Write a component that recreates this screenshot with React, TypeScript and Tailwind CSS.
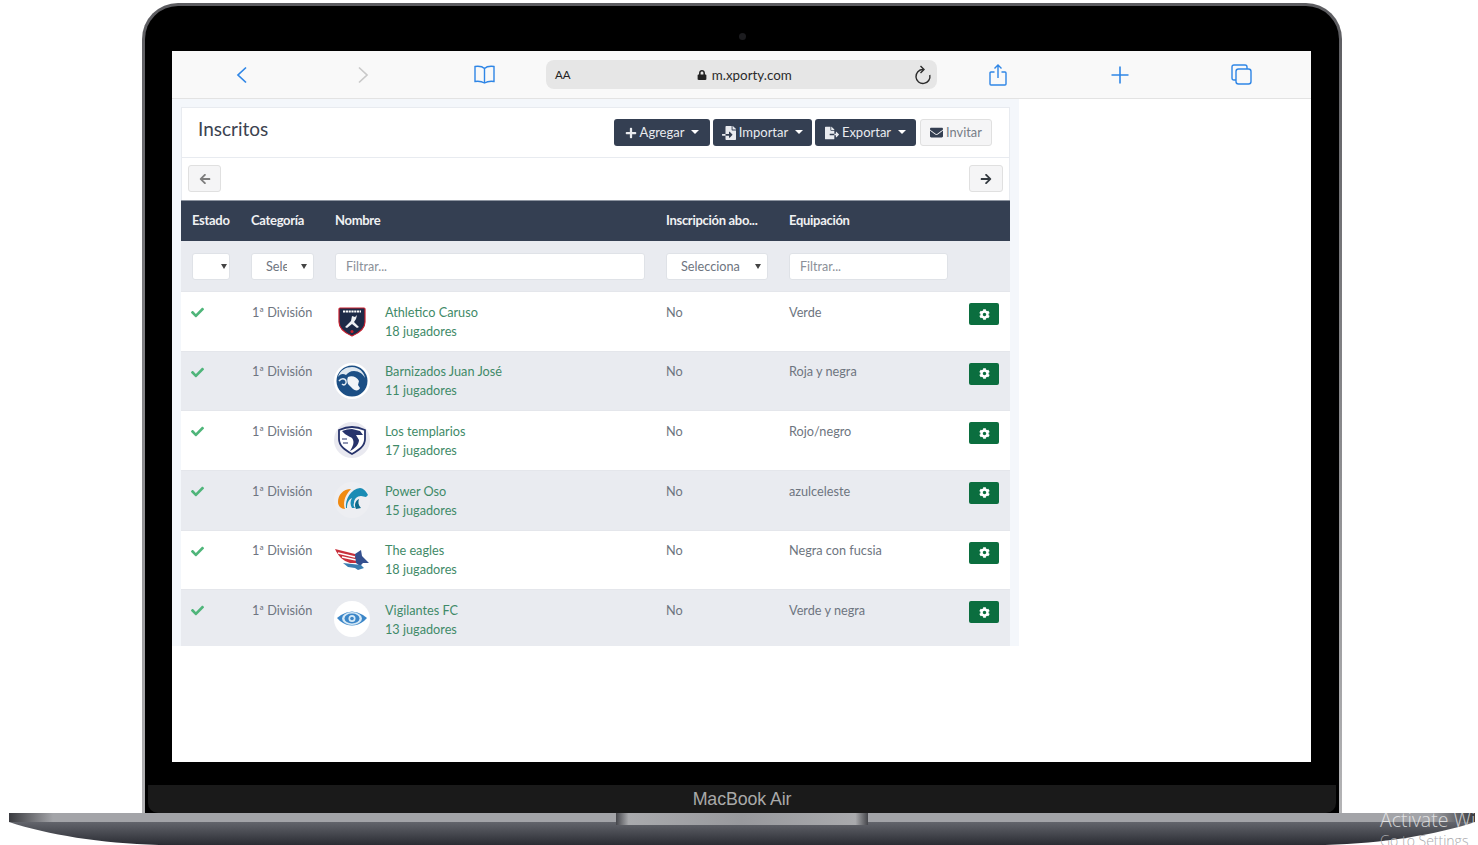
import { FaArrowLeft, FaArrowRight, FaCheck, FaCog, FaEnvelope, FaFileExport, FaFileImport, FaLock, FaPlus } from "react-icons/fa";

const cols = "grid grid-cols-[60px_84px_331px_123px_182px_49px]";

function LogoCaruso() {
  return (
    <svg viewBox="0 0 36 36" className="h-9 w-9">
      <path d="M6 5h24q1 0 1 1v13c0 7-6 11-13 14C11 30 5 26 5 19V6q0-1 1-1z" fill="#1d2a47" stroke="#c8202f" strokeWidth="1.2" />
      <path d="M9 8.500h18" stroke="#fff" strokeWidth="2.200" strokeDasharray="2.200 .6" />
      <path d="M11 24l6-6 1-5 3 1 2-2-1 4-2 3 5 5-2 1-5-4-5 4z" fill="#eef0f4" />
      <circle cx="18" cy="28.500" r="1.500" fill="#c8202f" />
    </svg>
  );
}

function LogoBarnizados() {
  return (
    <svg viewBox="0 0 36 36" className="h-9 w-9">
      <circle cx="18" cy="18" r="18" fill="#fff" />
      <circle cx="18" cy="18" r="15.500" fill="#1c4f85" />
      <path d="M4 14C6 7 12 4 18 4c7 0 12 5 13 11-2-4-6-7-11-7-4 0-6 2-8 4-3-2-6-1-8 2z" fill="#dfe8f0" />
      <path d="M14 14c4-2 9 0 11 4l-1 4 2 3c-1 3-5 3-7 1l-5-5c-1-3-1-5 0-7z" fill="#f2f5f8" />
      <path d="M5 18c2-3 6-3 7 0s-2 5-4 3" fill="none" stroke="#dfe8f0" strokeWidth="1.500" />
    </svg>
  );
}

function LogoTemplarios() {
  return (
    <svg viewBox="0 0 36 36" className="h-9 w-9">
      <circle cx="18" cy="18" r="18" fill="#e9e9f0" />
      <path d="M5 8q7-3 13-3t13 3v9c0 7-6 11-13 15C11 28 5 24 5 17z" fill="#fff" stroke="#27336b" strokeWidth="1.800" />
      <path d="M8 9q5-2 10-2l8 2 3 4-7 0 3 5c0 5-5 9-9 11 3-5 5-9 2-13-3-2-7-3-10-7z" fill="#27336b" />
      <path d="M8 17h5M9 21h5" stroke="#27336b" strokeWidth="1.200" />
    </svg>
  );
}

function LogoPowerOso() {
  return (
    <svg viewBox="0 0 36 36" className="h-9 w-9">
      <circle cx="18" cy="18" r="18" fill="#edeef2" />
      <path d="M17 7C9 7 4 13 4 20c0 4 3 7 7 7-2-5-1-13 6-20z" fill="#f08a12" />
      <path d="M12 26c-1-9 5-19 14-20 3 0 6 3 8 7l-2 2-5-1c-4 0-7 3-7 7-1 2 0 4 1 5h-3c-2-3-2-7 0-10-4 2-5 6-5 10z" fill="#1a8cb5" />
      <path d="M22 27c-2-4-1-8 3-10-1 3-1 6 2 9z" fill="#0e6b8c" />
    </svg>
  );
}

function LogoEagles() {
  return (
    <svg viewBox="0 0 36 36" className="h-9 w-9">
      <path d="M1 7l20 5 3 9-8 0C9 19 4 14 1 7z" fill="#c8303c" />
      <path d="M4 11l17 4M8 15l14 3" stroke="#fff" strokeWidth="1.300" />
      <path d="M21 12l6-4 1 6 7 7-6 0-3 3-4-3z" fill="#34508e" />
      <path d="M9 21l18 2 3 3-6 2-3-2-7-1z" fill="#3a7db0" />
    </svg>
  );
}

function LogoVigilantes() {
  return (
    <svg viewBox="0 0 36 36" className="h-9 w-9">
      <circle cx="18" cy="18" r="18" fill="#fff" />
      <path d="M3 17l4-3q11-7 22 0l4 3-3 3q-12 9-24 0z" fill="#3b86c8" />
      <ellipse cx="18" cy="17.500" rx="10" ry="6.500" fill="#d5e8f5" />
      <ellipse cx="18" cy="17.500" rx="7.500" ry="5" fill="#3b86c8" />
      <circle cx="18" cy="17.500" r="3.500" fill="#d5e8f5" />
      <circle cx="18" cy="17.500" r="1.800" fill="#3b86c8" />
    </svg>
  );
}

const rows = [
  { name: "Athletico Caruso", players: 18, kit: "Verde", logo: <LogoCaruso />, h: "h-[59.670px]" },
  { name: "Barnizados Juan José", players: 11, kit: "Roja y negra", logo: <LogoBarnizados />, h: "h-[59.670px]" },
  { name: "Los templarios", players: 17, kit: "Rojo/negro", logo: <LogoTemplarios />, h: "h-[59.670px]" },
  { name: "Power Oso", players: 15, kit: "azulceleste", logo: <LogoPowerOso />, h: "h-[59.670px]" },
  { name: "The eagles", players: 18, kit: "Negra con fucsia", logo: <LogoEagles />, h: "h-[59.670px]" },
  { name: "Vigilantes FC", players: 13, kit: "Verde y negra", logo: <LogoVigilantes />, h: "h-[56.650px]" },
];

function Caret() {
  return <span className="ml-[7px] h-0 w-0 -translate-y-[1px] border-x-[4px] border-t-[4px] border-x-transparent border-t-white" />;
}

function DarkButton({ w, icon, label }: { w: string; icon: React.ReactNode; label: string }) {
  return (
    <button type="button" className={`flex h-[27px] items-center justify-center rounded-[3px] bg-[#343f52] text-[13px] text-[#e9ebef] ${w}`}>
      {icon}
      <span className="ml-[3px]">{label}</span>
      <Caret />
    </button>
  );
}

function FakeSelect({ w, label }: { w: string; label: string }) {
  return (
    <div className={`flex h-[27px] items-center rounded-[3px] border border-[#dfe2e7] bg-white pl-[14px] pr-[6px] text-[12.7px] text-[#6e7580] ${w}`}>
      <span className="min-w-0 flex-1 overflow-hidden whitespace-nowrap pt-px">{label}</span>
      <span className="ml-[14px] h-0 w-0 border-x-[3px] border-t-[5px] border-x-transparent border-t-[#444]" />
    </div>
  );
}

function FakeInput({ w }: { w: string }) {
  return (
    <div className={`flex h-[27px] items-center rounded-[3px] border border-[#dfe2e7] bg-white pl-[10px] pt-px text-[12.5px] text-[#8b9099] ${w}`}>
      Filtrar...
    </div>
  );
}

function SafariBar() {
  const blue = "#2f86e6";
  return (
    <div className="flex h-[48px] items-center border-b border-[#e3e3e3] bg-[#f9f9f9] pl-[9px]">
      <div className="flex w-[121px] justify-center">
        <svg width="12" height="18" viewBox="0 0 12 18" fill="none" stroke={blue} strokeWidth="1.700"><path d="M10 1.500L2 9l8 7.500" /></svg>
      </div>
      <div className="flex w-[121px] justify-center">
        <svg width="12" height="18" viewBox="0 0 12 18" fill="none" stroke="#c9c9c9" strokeWidth="1.700"><path d="M2 1.500L10 9l-8 7.500" /></svg>
      </div>
      <div className="flex w-[123px] justify-center">
        <svg width="23" height="19" viewBox="0 0 23 19" fill="none" stroke={blue} strokeWidth="1.400">
          <path d="M11.500 3.500C9.500 1.500 6 1 2 1.500V16.500c4-.5 7 0 9.500 1.500 2.500-1.500 5.500-2 9.500-1.500V1.500C17 1 13.500 1.500 11.500 3.500zM11.500 3.500V18" />
        </svg>
      </div>
      <div className="flex h-[29px] w-[391px] items-center rounded-[8px] bg-[#e6e6e6] pl-[9px] pr-[5px]">
        <span className="text-[11.500px] text-[#222]">AA</span>
        <div className="flex flex-1 items-center justify-center pl-[4px] pt-px text-[13.400px] text-[#2b2b2b]">
          <FaLock className="mr-[5px] text-[10px] text-[#222]" />
          m.xporty.com
        </div>
        <svg width="18" height="20" viewBox="0 0 18 20" fill="none" stroke="#2b2b2b" strokeWidth="1.400">
          <path d="M9 4.500a7 7 0 1 0 6.800 5.500" />
          <path d="M6.500 1l3.500 3.500L6.500 8" />
        </svg>
      </div>
      <div className="flex w-[122px] justify-center">
        <svg width="18" height="22" viewBox="0 0 18 22" fill="none" stroke={blue} strokeWidth="1.400">
          <path d="M5.500 8H2q-1 0-1 1v11q0 1 1 1h14q1 0 1-1V9q0-1-1-1h-3.500" />
          <path d="M9 14V1.200M5.500 4.500L9 1l3.500 3.500" />
        </svg>
      </div>
      <div className="flex w-[121px] justify-center">
        <svg width="18" height="18" viewBox="0 0 18 18" fill="none" stroke={blue} strokeWidth="1.600"><path d="M9 .5v17M.5 9h17" /></svg>
      </div>
      <div className="flex w-[122px] justify-center">
        <svg width="21" height="21" viewBox="0 0 21 21" fill="none" stroke={blue} strokeWidth="1.400">
          <rect x="5" y="5" width="15" height="15" rx="2.500" />
          <path d="M5 16H3q-2 0-2-2V3q0-2 2-2h11q2 0 2 2v2" />
        </svg>
      </div>
    </div>
  );
}

function Card() {
  return (
    <div className="w-[829px] border-t border-x border-[#e8ebf0] bg-white">
      <div className="flex h-[50px] items-start justify-between border-b border-[#e8ebf0] pl-[16px] pr-[17px]">
        <h1 className="mt-[7px] text-[19px] leading-[28px] text-[#3c4350]">Inscritos</h1>
        <div className="mt-[11px] flex gap-[3px]">
          <DarkButton w="w-[96px]" icon={<FaPlus className="text-[12px]" />} label="Agregar" />
          <DarkButton w="w-[99px]" icon={<FaFileImport className="text-[14px]" />} label="Importar" />
          <DarkButton w="w-[101px]" icon={<FaFileExport className="text-[14px]" />} label="Exportar" />
          <button type="button" className="ml-[1px] flex h-[27px] w-[72px] items-center justify-center rounded-[3px] border border-[#e0e0e0] bg-[#f5f5f6] text-[12.800px] text-[#767c86]">
            <FaEnvelope className="mr-[3px] text-[13px] text-[#343f52]" />
            Invitar
          </button>
        </div>
      </div>
      <div className="flex h-[42px] items-start justify-between pl-[6px] pr-[6px] pt-[7px]">
        <button type="button" className="flex h-[27px] w-[33px] items-center justify-center rounded-[3px] border border-[#e0e0e0] bg-[#f5f5f6] text-[12px] text-[#7d7d7d]">
          <FaArrowLeft />
        </button>
        <button type="button" className="flex h-[27px] w-[34px] items-center justify-center rounded-[3px] border border-[#e0e0e0] bg-[#f5f5f6] text-[12px] text-[#343a40]">
          <FaArrowRight />
        </button>
      </div>
      <div className="-mx-px">
        <div className={`${cols} h-[41px] items-center border-t border-[#8d94a0] bg-[#343f52] text-[13px] font-bold tracking-[-0.3px] text-[#f0f1f3]`}>
          <div className="pl-[11px]">Estado</div>
          <div className="pl-[10px]">Categoría</div>
          <div className="pl-[10px]">Nombre</div>
          <div className="pl-[10px]">Inscripción abo...</div>
          <div className="pl-[10px]">Equipación</div>
          <div />
        </div>
        <div className={`${cols} h-[50px] items-start bg-[#e9ebf0] pt-[12px]`}>
          <div className="pl-[11px]"><FakeSelect w="w-[38px]" label="" /></div>
          <div className="pl-[10px]"><FakeSelect w="w-[63px]" label="Selecciona" /></div>
          <div className="pl-[10px]"><FakeInput w="w-[310px]" /></div>
          <div className="pl-[10px]"><FakeSelect w="w-[102px]" label="Selecciona" /></div>
          <div className="pl-[10px]"><FakeInput w="w-[159px]" /></div>
          <div />
        </div>
        {rows.map((r, i) => (
          <div key={r.name} className={`${cols} ${r.h} border-t border-[#e4e6eb] text-[12.700px] leading-[19px] text-[#6e7580] ${i % 2 === 1 ? "bg-[#e9ebf0]" : "bg-white"}`}>
            <div className="pl-[10px] pt-[14px] text-[13px] text-[#4fb57a]"><FaCheck /></div>
            <div className="pl-[11px] pt-[10.600px]">1ª División</div>
            <div className="flex">
              <div className="ml-[9px] pt-[11px]">{r.logo}</div>
              <div className="ml-[15px] pt-[10.600px] text-[#3f8a68]">
                <div>{r.name}</div>
                <div>{r.players} jugadores</div>
              </div>
            </div>
            <div className="pl-[10px] pt-[10.600px]">No</div>
            <div className="pl-[10px] pt-[10.600px]">{r.kit}</div>
            <div className="pl-[8px] pt-[11px]">
              <button type="button" className="flex h-[22px] w-[30px] items-center justify-center rounded-[2px] bg-[#0b6e3f] text-[11px] text-white">
                <FaCog />
              </button>
            </div>
          </div>
        ))}
      </div>
    </div>
  );
}

function LaptopBase() {
  return (
    <svg width="1466" height="32" viewBox="0 0 1466 32" className="ml-[9px] block">
      <defs>
        <linearGradient id="lip" x1="0" x2="1" y1="0" y2="0">
          <stop offset="0" stopColor="#3a3b40" />
          <stop offset="0.03" stopColor="#a3a4a8" />
          <stop offset="0.97" stopColor="#a3a4a8" />
          <stop offset="1" stopColor="#3a3b40" />
        </linearGradient>
        <linearGradient id="body" x1="0" x2="0" y1="0" y2="1">
          <stop offset="0" stopColor="#63656c" />
          <stop offset="1" stopColor="#2a2c33" />
        </linearGradient>
        <linearGradient id="notch" x1="0" x2="1" y1="0" y2="0">
          <stop offset="0" stopColor="#45464b" />
          <stop offset="0.05" stopColor="#a9aaad" />
          <stop offset="0.5" stopColor="#98999d" />
          <stop offset="0.95" stopColor="#a9aaad" />
          <stop offset="1" stopColor="#45464b" />
        </linearGradient>
      </defs>
      <path d="M0 9C40 22 90 30 150 32H1316C1376 30 1426 22 1466 9z" fill="url(#body)" />
      <rect x="0" y="0" width="1466" height="9" fill="url(#lip)" />
      <rect x="607" y="0" width="252" height="12" fill="url(#notch)" />
    </svg>
  );
}

export default function App() {
  return (
    <div className="relative h-[845px] w-[1478px] overflow-hidden bg-white font-['Lato','Noto_Sans',sans-serif]">
      <div className="ml-[142px] mt-[3px] h-[810px] w-[1200px] rounded-t-[36px] bg-gradient-to-b from-[#5c5c60] to-[#b4b4b6] px-[3px] pt-[3px]">
        <div className="flex h-[807px] flex-col rounded-t-[33px] bg-black">
          <div className="flex h-[45px] items-start justify-center pt-[27px]">
            <div className="h-[7px] w-[7px] rounded-full bg-[#1c1c1f]" />
          </div>
          <div className="ml-[27px] h-[711px] w-[1139px] bg-white">
            <SafariBar />
            <div className="w-[847px] bg-[#f4f7fb] pl-[9px] pt-[8px]">
              <Card />
            </div>
          </div>
          <div className="mx-[3px] mt-[23px] flex h-[28px] items-center justify-center rounded-b-[10px] bg-[#1a1a1a] font-['Liberation_Sans',sans-serif] text-[17.800px] font-light tracking-[-0.1px] text-[#a9a9a9]">
            MacBook Air
          </div>
        </div>
      </div>
      <LaptopBase />
      <div className="absolute left-[1380px] top-[807px] whitespace-nowrap font-['Open_Sans',sans-serif] text-[19.500px] font-light leading-[26px] text-white/70">Activate Wi</div>
      <div className="absolute left-[1380px] top-[832px] whitespace-nowrap font-['Open_Sans',sans-serif] text-[14px] font-light leading-[18px] text-[#a8a8ac]">Go to Settings</div>
    </div>
  );
}
